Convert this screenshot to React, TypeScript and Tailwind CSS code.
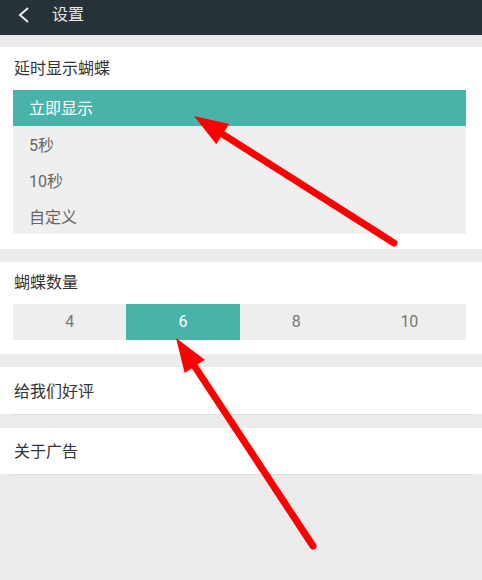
import React from 'react';

const delays = ['立即显示', '5秒', '10秒', '自定义'];
const counts = ['4', '6', '8', '10'];

const Arrow = ({ x1, y1, x2, y2 }: { x1: number; y1: number; x2: number; y2: number }) => {
  // tail (x1,y1) -> tip (x2,y2)
  const dx = x2 - x1;
  const dy = y2 - y1;
  const len = Math.hypot(dx, dy);
  const ux = dx / len;
  const uy = dy / len;
  const headLen = 34;
  const headW = 12;
  const bx = x2 - ux * headLen;
  const by = y2 - uy * headLen;
  const p1 = `${bx - uy * headW},${by + ux * headW}`;
  const p2 = `${bx + uy * headW},${by - ux * headW}`;
  return (
    <g>
      <line x1={x1} y1={y1} x2={bx + ux * 4} y2={by + uy * 4} stroke="#ff0000" strokeWidth={7} strokeLinecap="round" />
      <polygon points={`${x2},${y2} ${p1} ${p2}`} fill="#ff0000" />
    </g>
  );
};

export default function App() {
  return (
    <div
      className="relative w-[482px] h-[580px] bg-[#ebebeb] overflow-hidden"
      style={{ fontFamily: 'Roboto, "Noto Sans CJK SC", sans-serif' }}
    >
      <div className="h-[35px] bg-[#263138] flex items-center pb-[6px]">
        <svg width="14" height="16" viewBox="0 0 14 16" className="ml-[16px]">
          <path d="M12 1 L4 8 L12 15" fill="none" stroke="#eceff1" strokeWidth="2" />
        </svg>
        <span className="ml-[22px] text-[16px] text-[#e8e8e8]">设置</span>
      </div>

      <div className="mt-[12px] bg-white pb-[15px]">
        <div className="h-[43px] flex items-center px-[14px] text-[16px] text-[#333]">延时显示蝴蝶</div>
        <div className="ml-[13px] mr-[16px] bg-[#efefef]">
          {delays.map((d, i) => (
            <div
              key={d}
              className={
                i === 0
                  ? 'h-[36px] flex items-center pl-[16px] pt-[1px] text-[16px] bg-[#48b3a9] text-white'
                  : 'h-[36px] flex items-center pl-[16px] pt-[3px] text-[16px] text-[#666]'
              }
            >
              {d}
            </div>
          ))}
        </div>
      </div>

      <div className="mt-[13px] bg-white pb-[14px]">
        <div className="h-[42px] flex items-center px-[14px] text-[16px] text-[#333]">蝴蝶数量</div>
        <div className="ml-[13px] mr-[16px] grid grid-cols-4 bg-[#eeeeee]">
          {counts.map((c, i) => (
            <div
              key={c}
              className={
                i === 1
                  ? 'h-[36px] flex items-center justify-center text-[16px] bg-[#48b3a9] text-white'
                  : 'h-[36px] flex items-center justify-center text-[16px] text-[#777]'
              }
            >
              {c}
            </div>
          ))}
        </div>
      </div>

      <div className="mt-[13px] bg-white">
        <div className="h-[47px] flex items-center px-[14px] pt-[2px] text-[16px] text-[#333]">给我们好评</div>
      </div>
      <div className="mx-[11px] h-px bg-[#dddddd]" />

      <div className="mt-[13px] bg-white">
        <div className="h-[46px] flex items-center px-[14px] pt-[2px] text-[16px] text-[#333]">关于广告</div>
      </div>
      <div className="mx-[11px] h-px bg-[#dddddd]" />

      <svg className="absolute inset-0 pointer-events-none" width="482" height="580">
        <Arrow x1={394} y1={243} x2={194} y2={116} />
        <Arrow x1={313} y1={546} x2={176} y2={338} />
      </svg>
    </div>
  );
}
